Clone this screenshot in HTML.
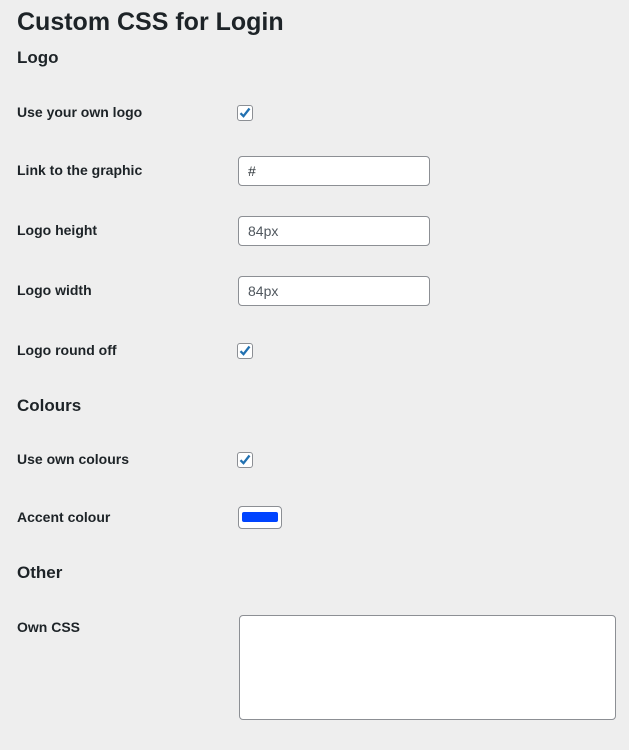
<!DOCTYPE html>
<html><head><style>
body{margin:0;width:629px;height:750px;background:#eeeeee;font-family:"Liberation Sans",sans-serif;color:#1d2327;position:relative;overflow:hidden}
.a{position:absolute;white-space:nowrap}
h1{position:absolute;left:17px;top:8px;margin:0;font-size:25px;font-weight:bold}
.h{font-size:17px;font-weight:bold}
.l{font-size:14px;font-weight:bold;left:17px}
.cb{position:absolute;left:237px;width:14px;height:14px;border:1px solid #8c8f94;border-radius:3px;background:#fff}
.in{position:absolute;left:238px;width:190px;height:28px;border:1px solid #8c8f94;border-radius:4px;background:#fff;font-size:14px;line-height:28px;box-sizing:content-box}
.in span{padding-left:9px;color:#50575e}
</style></head><body>
<h1>Custom CSS for Login</h1>
<div class="a h" style="left:17px;top:48px">Logo</div>
<div class="a l" style="top:104px">Use your own logo</div>
<div class="cb" style="top:105px"><svg width="14" height="14" viewBox="0 0 14 14"><path d="M2.5 7.2 L5.5 10.2 L11.5 2.5" fill="none" stroke="#2271b1" stroke-width="2.3"/></svg></div>
<div class="a l" style="top:162px">Link to the graphic</div>
<div class="in" style="top:156px"><span style="color:#2c3338">#</span></div>
<div class="a l" style="top:222px">Logo height</div>
<div class="in" style="top:216px"><span>84px</span></div>
<div class="a l" style="top:282px">Logo width</div>
<div class="in" style="top:276px"><span>84px</span></div>
<div class="a l" style="top:342px">Logo round off</div>
<div class="cb" style="top:343px"><svg width="14" height="14" viewBox="0 0 14 14"><path d="M2.5 7.2 L5.5 10.2 L11.5 2.5" fill="none" stroke="#2271b1" stroke-width="2.3"/></svg></div>
<div class="a h" style="left:17px;top:396px">Colours</div>
<div class="a l" style="top:451px">Use own colours</div>
<div class="cb" style="top:452px"><svg width="14" height="14" viewBox="0 0 14 14"><path d="M2.5 7.2 L5.5 10.2 L11.5 2.5" fill="none" stroke="#2271b1" stroke-width="2.3"/></svg></div>
<div class="a l" style="top:509px">Accent colour</div>
<div style="position:absolute;left:238px;top:506px;width:42px;height:21px;border:1px solid #8c8f94;border-radius:4px;background:#fff"><div style="position:absolute;left:3px;top:5px;width:36px;height:10px;background:#0044ff;border-radius:2px"></div></div>
<div class="a h" style="left:17px;top:563px">Other</div>
<div class="a l" style="top:619px">Own CSS</div>
<div style="position:absolute;left:239px;top:615px;width:375px;height:103px;border:1px solid #8c8f94;border-radius:4px;background:#fff"></div>
</body></html>
